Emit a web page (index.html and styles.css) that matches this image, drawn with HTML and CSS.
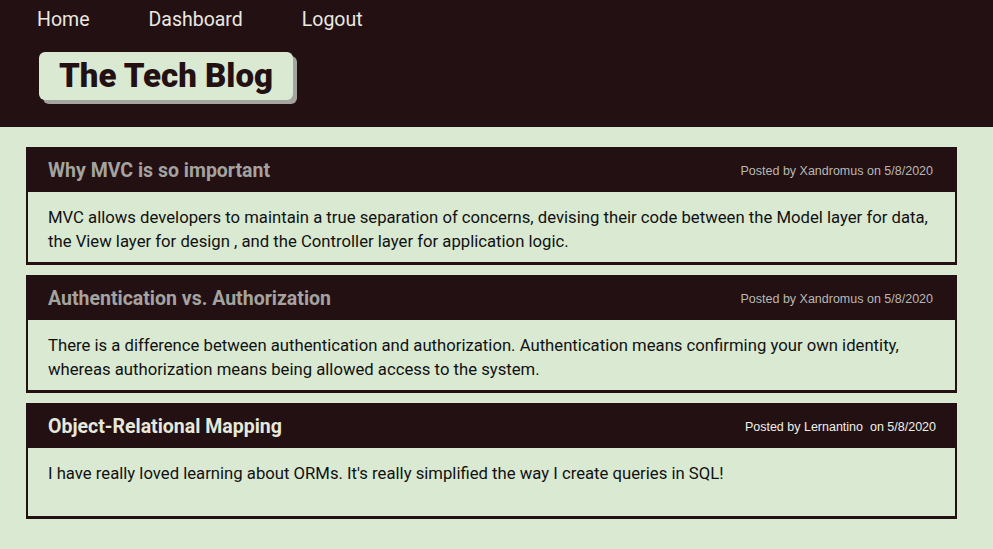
FILE: index.html
```html
<!DOCTYPE html>
<html>
<head>
<meta charset="utf-8">
<title>The Tech Blog</title>
<link rel="stylesheet" href="styles.css">
</head>
<body>
<header class="site-header">
  <nav class="nav">
    <a href="#" class="nav-link">Home</a>
    <a href="#" class="nav-link">Dashboard</a>
    <a href="#" class="nav-link">Logout</a>
  </nav>
  <h1 class="brand">The Tech Blog</h1>
</header>
<main class="posts">
  <article class="post">
    <div class="post-head">
      <h2 class="post-title">Why MVC is so important</h2>
      <span class="post-meta">Posted by Xandromus on 5/8/2020</span>
    </div>
    <div class="post-body">
      <p>MVC allows developers to maintain a true separation of concerns, devising their code between the Model layer for data, the View layer for design , and the Controller layer for application logic.</p>
    </div>
  </article>
  <article class="post">
    <div class="post-head">
      <h2 class="post-title">Authentication vs. Authorization</h2>
      <span class="post-meta">Posted by Xandromus on 5/8/2020</span>
    </div>
    <div class="post-body">
      <p>There is a difference between authentication and authorization. Authentication means confirming your own identity, whereas authorization means being allowed access to the system.</p>
    </div>
  </article>
  <article class="post post-active">
    <div class="post-head">
      <h2 class="post-title">Object-Relational Mapping</h2>
      <span class="post-meta">Posted by Lernantino&nbsp; on 5/8/2020</span>
    </div>
    <div class="post-body">
      <p>I have really loved learning about ORMs. It's really simplified the way I create queries in SQL!</p>
    </div>
  </article>
</main>
</body>
</html>
```
FILE: styles.css
```css
* { box-sizing: border-box; }
html, body { margin: 0; padding: 0; }
body {
  background: #d9e9d2;
  font-family: Roboto, "Liberation Sans", sans-serif;
  color: #111;
}
.site-header {
  background: #231012;
  height: 127px;
  padding: 7px 0 0 37px;
}
.nav {
  display: flex;
  gap: 59px;
}
.nav-link {
  color: #e9e9e0;
  text-decoration: none;
  font-size: 19.5px;
  line-height: 26px;
}
.brand {
  display: inline-block;
  margin: 19px 0 0 2px;
  background: #d9e9d2;
  color: #231012;
  font-size: 33px;
  font-weight: 900;
  line-height: 48px;
  height: 48px;
  padding: 0 20px;
  border-radius: 6px;
  box-shadow: 4px 4px 0 #a4a4a0;
}
.posts {
  padding: 20px 36px 20px 26px;
  display: flex;
  flex-direction: column;
  gap: 10px;
}
.post {
  border: 2px solid #231012;
  border-bottom-width: 3px;
  background: #d9e9d2;
}
.post-head {
  background: #231012;
  height: 43px;
  display: flex;
  align-items: center;
  justify-content: space-between;
  padding: 0 22px 0 20px;
}
.post-title {
  margin: 0;
  font-size: 19.5px;
  font-weight: 700;
  color: #a3a3a0;
}
.post-meta {
  font-family: "Liberation Sans", Arial, sans-serif;
  font-size: 12.5px;
  color: #b8b8b2;
}
.post-active .post-title { color: #e6e8dc; }
.post-active .post-meta { color: #f0f0ea; }
.post-active .post-head { padding-right: 19px; }
.post-body {
  padding: 14px 20px 8px 20px;
  min-height: 68px;
}
.post-body p {
  margin: 0;
  font-size: 16.7px;
  line-height: 24px;
  color: #111;
}
```
